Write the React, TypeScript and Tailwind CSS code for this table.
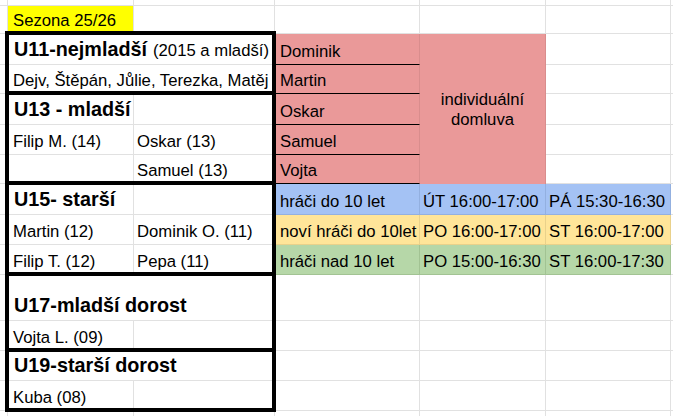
import React from "react";

const ROWS = [
  "row-start-1", "row-start-2", "row-start-3", "row-start-4", "row-start-5",
  "row-start-6", "row-start-7", "row-start-8", "row-start-9", "row-start-10",
  "row-start-11", "row-start-12", "row-start-13", "row-start-14", "row-start-15",
];
const COLS = [
  "col-start-1", "col-start-2", "col-start-3", "col-start-4",
  "col-start-5", "col-start-6", "col-start-7",
];

const REG = "flex items-end whitespace-nowrap leading-none text-[16.7px] pb-[3px]";
const BOLD = "flex items-end whitespace-nowrap leading-none text-[19.8px] font-bold pb-[4px]";

const PINK = "bg-[#ea9999] -mb-px -mr-px border-b border-b-black border-r border-r-[#d98d8d]";
const BLUE = "bg-[#a4c2f4] -mb-px -mr-px border-b border-r border-[#93b0e0]";
const LYEL = "bg-[#ffe599] -mb-px -mr-px border-b border-r border-[#e9d18b]";
const GREEN = "bg-[#b6d7a8] -mb-px -mr-px border-b border-r border-[#a2c393]";

const BOX = "col-start-2 col-span-2 -mt-[3px] -mb-[2px] -ml-[3px] -mr-[2px] border-4 border-black pointer-events-none";

export default function App() {
  const bg: React.ReactNode[] = [];
  for (let r = 0; r < 15; r++) {
    for (let c = 0; c < 7; c++) {
      bg.push(<div key={`b${r}-${c}`} className={`${ROWS[r]} ${COLS[c]} bg-white`} />);
    }
  }
  return (
    <div className="w-[673px] h-[416px] overflow-hidden bg-white">
      <div className="grid w-[673px] h-[416px] gap-px bg-[#e1e1e1] grid-cols-[7px_125px_140px_144px_125px_124px_2px] grid-rows-[5px_27px_30px_28px_30px_29px_28px_30px_29px_29px_45px_29px_29px_29px_5px] font-['Liberation_Sans',Arial,sans-serif] text-black">
        {bg}

        {/* Season */}
        <div className={`row-start-2 col-start-2 bg-[#ffff00] pl-[5px] ${REG}`}>Sezona 25/26</div>

        {/* U11 */}
        <div className="row-start-3 col-start-2 col-span-2 bg-white flex items-end whitespace-nowrap leading-none pb-[4px] pl-[6px]">
          <span className="text-[19.8px] font-bold">U11-nejmladší</span>
          <span className="text-[16.7px] ml-[6px]">(2015 a mladší)</span>
        </div>
        <div className={`row-start-4 col-start-2 col-span-2 bg-white pl-[5px] ${REG}`}>Dejv, Štěpán, Jůlie, Terezka, Matěj</div>

        {/* U13 */}
        <div className={`row-start-5 col-start-2 pl-[6px] ${BOLD}`}>U13 - mladší</div>
        <div className={`row-start-6 col-start-2 pl-[5px] ${REG}`}>Filip M. (14)</div>
        <div className={`row-start-6 col-start-3 pl-[3px] ${REG}`}>Oskar (13)</div>
        <div className={`row-start-7 col-start-3 pl-[3px] ${REG}`}>Samuel (13)</div>

        {/* U15 */}
        <div className={`row-start-8 col-start-2 pl-[6px] ${BOLD}`}>U15- starší</div>
        <div className={`row-start-9 col-start-2 pl-[5px] ${REG}`}>Martin (12)</div>
        <div className={`row-start-9 col-start-3 pl-[3px] ${REG}`}>Dominik O. (11)</div>
        <div className={`row-start-10 col-start-2 pl-[5px] ${REG}`}>Filip T. (12)</div>
        <div className={`row-start-10 col-start-3 pl-[3px] ${REG}`}>Pepa (11)</div>

        {/* U17 */}
        <div className={`row-start-11 col-start-2 col-span-2 bg-white pl-[6px] ${BOLD}`}>U17-mladší dorost</div>
        <div className={`row-start-12 col-start-2 pl-[5px] ${REG}`}>Vojta L. (09)</div>

        {/* U19 */}
        <div className={`row-start-13 col-start-2 col-span-2 bg-white pl-[6px] ${BOLD}`}>U19-starší dorost</div>
        <div className={`row-start-14 col-start-2 pl-[5px] ${REG}`}>Kuba (08)</div>

        {/* Pink individual block */}
        <div className={`row-start-3 col-start-4 pl-[5px] ${PINK} ${REG}`}>Dominik</div>
        <div className={`row-start-4 col-start-4 pl-[5px] ${PINK} ${REG}`}>Martin</div>
        <div className={`row-start-5 col-start-4 pl-[5px] ${PINK} ${REG}`}>Oskar</div>
        <div className={`row-start-6 col-start-4 pl-[5px] ${PINK} ${REG}`}>Samuel</div>
        <div className={`row-start-7 col-start-4 pl-[5px] ${PINK} ${REG}`}>Vojta</div>
        <div className="row-start-3 row-span-5 col-start-5 bg-[#ea9999] -mb-px -mr-px border-r border-r-[#d98d8d] flex items-center justify-center text-center text-[16.7px] leading-[20px] pt-[2px]">
          <div>
            individuální
            <br />
            domluva
          </div>
        </div>

        {/* Schedule */}
        <div className={`row-start-8 col-start-4 pl-[5px] ${BLUE} ${REG}`}>hráči do 10 let</div>
        <div className={`row-start-8 col-start-5 pl-[3px] ${BLUE} ${REG}`}>ÚT 16:00-17:00</div>
        <div className={`row-start-8 col-start-6 pl-[3px] ${BLUE} ${REG}`}>PÁ 15:30-16:30</div>

        <div className={`row-start-9 col-start-4 pl-[5px] ${LYEL} ${REG}`}>noví hráči do 10let</div>
        <div className={`row-start-9 col-start-5 pl-[3px] ${LYEL} ${REG}`}>PO 16:00-17:00</div>
        <div className={`row-start-9 col-start-6 pl-[3px] ${LYEL} ${REG}`}>ST 16:00-17:00</div>

        <div className={`row-start-10 col-start-4 pl-[5px] ${GREEN} ${REG}`}>hráči nad 10 let</div>
        <div className={`row-start-10 col-start-5 pl-[3px] ${GREEN} ${REG}`}>PO 15:00-16:30</div>
        <div className={`row-start-10 col-start-6 pl-[3px] ${GREEN} ${REG}`}>ST 16:00-17:30</div>

        {/* Group boxes */}
        <div className={`row-start-3 row-span-2 ${BOX}`} />
        <div className={`row-start-5 row-span-3 ${BOX}`} />
        <div className={`row-start-8 row-span-3 ${BOX}`} />
        <div className={`row-start-11 row-span-2 ${BOX}`} />
        <div className={`row-start-13 row-span-2 ${BOX}`} />
      </div>
    </div>
  );
}
